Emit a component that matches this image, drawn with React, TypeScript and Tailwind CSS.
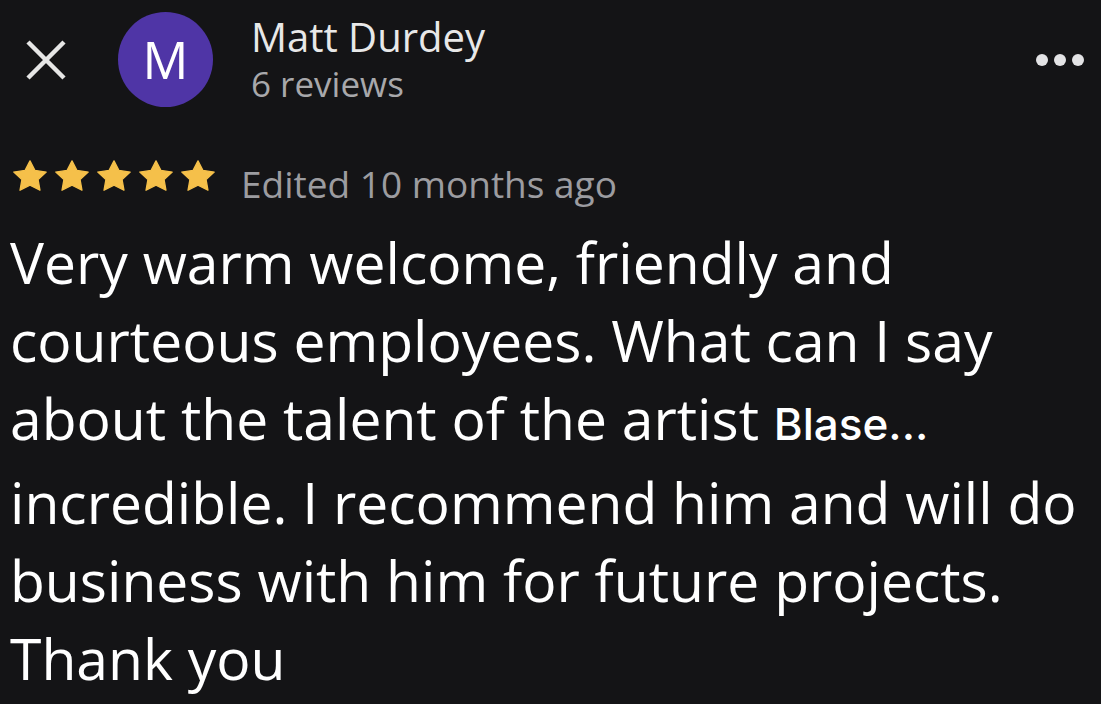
import React from "react";

const FONT = { fontFamily: '"Open Sans", "Noto Sans", Arial, sans-serif' };

function Star() {
  return (
    <svg viewBox="1.5 1.5 21 20" preserveAspectRatio="none" className="h-[31px] w-[34px]">
      <path
        d="M12 2l3.09 6.26L22 9.27l-5 4.87 1.18 6.88L12 17.77l-6.18 3.25L7 14.14 2 9.27l6.91-1.01z"
        fill="#f5c04a"
        stroke="#f5c04a"
        strokeWidth="0.8"
        strokeLinejoin="round"
      />
    </svg>
  );
}

const LINES = [
  "Very warm welcome, friendly and",
  "courteous employees. What can I say",
  null,
  "incredible. I recommend him and will do",
  "business with him for future projects.",
  "Thank you",
];

export default function App() {
  return (
    <div className="w-[1101px] h-[704px] overflow-hidden bg-[#141416] text-white" style={FONT}>
      {/* header */}
      <div className="flex items-start pt-[12px] pl-[25px] pr-[17px]">
        <svg viewBox="0 0 42 42" className="mt-[27px] h-[42px] w-[42px] shrink-0">
          <path d="M3 3L39 39M39 3L3 39" stroke="#e6e6e6" strokeWidth="4.5" strokeLinecap="butt" />
        </svg>
        <div className="ml-[51px] flex h-[95px] w-[95px] shrink-0 items-center justify-center rounded-full bg-[#4f35a6]">
          <span className="text-[51px] leading-none text-white">M</span>
        </div>
        <div className="ml-[38px] flex flex-col">
          <span className="mt-[5px] text-[40px] leading-[40px] text-[#e8e8e8]">Matt Durdey</span>
          <span className="mt-[9px] text-[35px] leading-[36px] text-[#a8a8ab]">6 reviews</span>
        </div>
        <div className="ml-auto mt-[42px] flex gap-[6px]">
          <span className="h-[12px] w-[12px] rounded-full bg-[#e3e3e5]" />
          <span className="h-[12px] w-[12px] rounded-full bg-[#e3e3e5]" />
          <span className="h-[12px] w-[12px] rounded-full bg-[#e3e3e5]" />
        </div>
      </div>

      {/* rating */}
      <div className="mt-[53px] flex items-start pl-[13px]">
        <div className="flex gap-[8px]">
          <Star />
          <Star />
          <Star />
          <Star />
          <Star />
        </div>
        <span className="ml-[26px] mt-[4px] text-[37px] leading-[40px] text-[#9c9ca0]">
          Edited 10 months ago
        </span>
      </div>

      {/* body */}
      <div className="mt-[19px] pl-[10px] text-[57px] leading-[78px] text-white">
        {LINES.map((l, i) => (
          <div key={i} className="whitespace-nowrap">
            {l ?? (
              <>
                about the talent of the artist{" "}
                <span className="font-medium" style={{ fontFamily: "Inter, sans-serif", fontSize: 44 }}>
                  Blase...
                </span>
              </>
            )}
          </div>
        ))}
      </div>
    </div>
  );
}
